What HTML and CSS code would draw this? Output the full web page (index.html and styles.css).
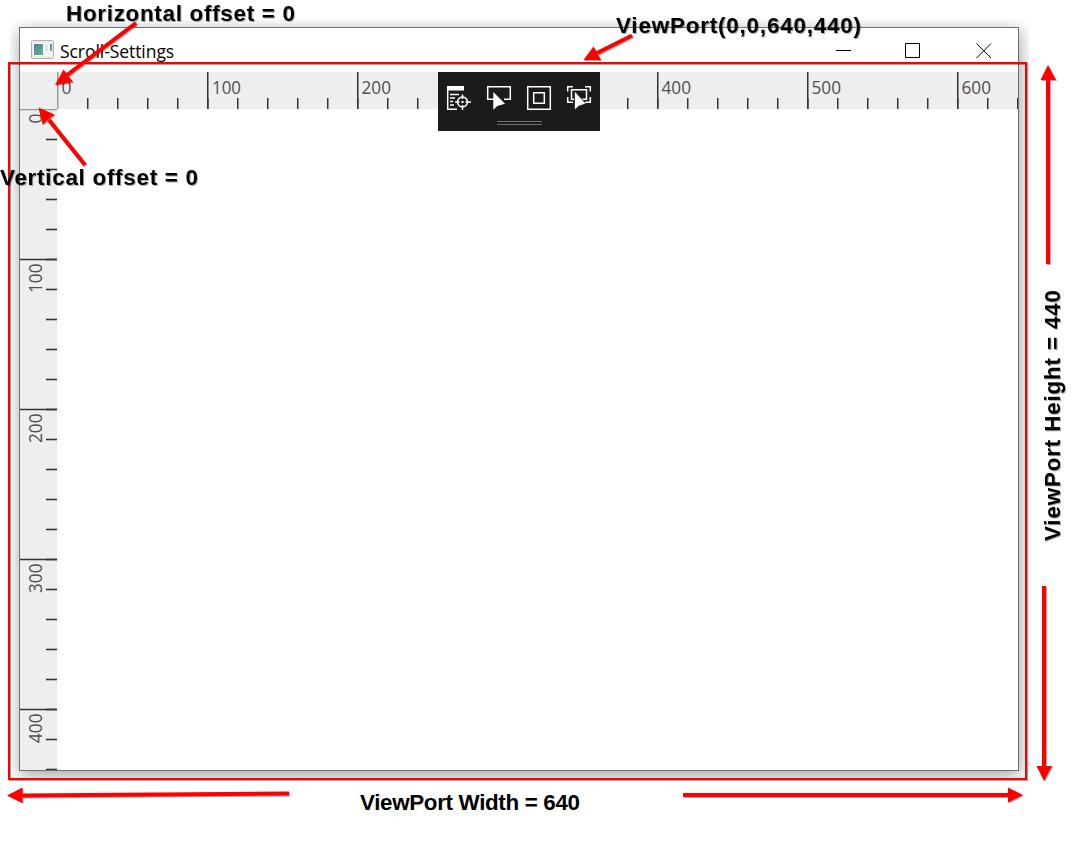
FILE: index.html
```html
<!DOCTYPE html>
<html lang="en">
<head>
<meta charset="utf-8">
<title>Scroll-Settings</title>
<link rel="stylesheet" href="styles.css">
</head>
<body>
<main class="stage">
  <div class="backdrop">
    <section class="window">
      <header class="titlebar">
        <svg class="app-icon" width="23" height="19" viewBox="0 0 23 19">
          <defs><linearGradient id="pane" x1="0" y1="0" x2="1" y2="1"><stop offset="0" stop-color="#4b83a8"/><stop offset="1" stop-color="#62b584"/></linearGradient></defs>
          <rect x=".5" y=".5" width="22" height="18" rx="1" fill="#e9edf1" stroke="#a9b3bd"/>
          <rect x="2" y="3" width="19" height="13" fill="#fff"/>
          <rect x="3" y="4" width="9" height="11" fill="url(#pane)"/>
          <rect x="14" y="4" width="3" height="7" fill="#e0e6ea"/>
          <rect x="19" y="4" width="2" height="7" fill="url(#pane)"/>
          <rect x="14" y="12" width="7" height="3" fill="#f0f2f3"/>
        </svg>
        <h1 class="title">Scroll-Settings</h1>
        <svg class="controls" width="156" height="15" viewBox="0 0 156 15" fill="none" stroke="#000">
          <path d="M0 7.5H15M69.5 .5H83.5V14.5H69.5ZM140.5 .5L155 15M155 .5L140.5 15"/>
        </svg>
      </header>
      <div class="workspace">
        <div class="corner"></div>
        <svg class="ruler" width="961" height="37" viewBox="0 0 961 37">
          <defs><pattern id="h-ticks" width="30" height="37" patternUnits="userSpaceOnUse"><rect y="26" width="1.5" height="11" fill="#333"/></pattern></defs>
          <rect x="10" width="951" height="37" fill="url(#h-ticks)"/>
          <path class="origin" d="M.75 0V37"/>
          <path class="major" d="M150.75 0V37M300.75 0V37M450.75 0V37M600.75 0V37M750.75 0V37M900.75 0V37"/>
          <g class="numbers">
            <text x="4.5" y="22" textLength="10" lengthAdjust="spacingAndGlyphs">0</text>
            <text x="155" y="22" textLength="29" lengthAdjust="spacingAndGlyphs">100</text>
            <text x="304.5" y="22" textLength="29.5" lengthAdjust="spacingAndGlyphs">200</text>
            <text x="454.5" y="22" textLength="29.5" lengthAdjust="spacingAndGlyphs">300</text>
            <text x="604.5" y="22" textLength="29.5" lengthAdjust="spacingAndGlyphs">400</text>
            <text x="754.5" y="22" textLength="29.5" lengthAdjust="spacingAndGlyphs">500</text>
            <text x="904.5" y="22" textLength="29.5" lengthAdjust="spacingAndGlyphs">600</text>
          </g>
        </svg>
        <svg class="ruler" width="37" height="661" viewBox="0 0 37 661">
          <defs><pattern id="v-ticks" width="37" height="30" patternUnits="userSpaceOnUse"><rect x="26" y="0" width="11" height="1.1" fill="#333"/><rect x="26" y="1" width="11" height="1" fill="#333" opacity=".2"/><rect x="26" y="29" width="11" height="1" fill="#333" opacity=".3"/></pattern></defs>
          <rect y="5" width="37" height="656" fill="url(#v-ticks)"/>
          <path class="origin" d="M0 .5H37"/>
          <path class="major" d="M0 150.5H37M0 300.5H37M0 450.5H37M0 600.5H37"/>
          <g class="numbers">
            <text transform="translate(22 14.5) rotate(-90)" textLength="10" lengthAdjust="spacingAndGlyphs">0</text>
            <text transform="translate(22.4 184) rotate(-90)" textLength="29.5" lengthAdjust="spacingAndGlyphs">100</text>
            <text transform="translate(22.4 334) rotate(-90)" textLength="29.5" lengthAdjust="spacingAndGlyphs">200</text>
            <text transform="translate(22.4 484) rotate(-90)" textLength="29.5" lengthAdjust="spacingAndGlyphs">300</text>
            <text transform="translate(22.4 634) rotate(-90)" textLength="29.5" lengthAdjust="spacingAndGlyphs">400</text>
          </g>
        </svg>
        <div class="canvas"></div>
      </div>
    </section>
  </div>
  <svg class="toolbar" width="162" height="59" viewBox="0 0 162 59">
    <rect width="162" height="59" fill="#1b1b1b"/>
    <g fill="none" stroke="#fff" stroke-width="1.5">
      <path d="M9.7 14V37.3H19M12 22.5H21M12 26H17M12 29.5H15M12 33H16"/>
      <circle cx="24.5" cy="30" r="5"/>
      <path d="M24.5 22.5V27M24.5 33V38M17 30H21.5M27.5 30H33"/>
      <path d="M55.5 27.3H49.7V14.7H72.3V27.3H66"/>
      <path d="M89.7 14.7H112.3V37.3H89.7ZM95.7 20.7H106.3V31.3H95.7Z"/>
      <path d="M129.7 19.5V14.7H135M147 14.7H152.3V19.5M129.7 25V30.3H135M147 30.3H152.3V25M136 27.3H133.5V17.7H148.5V27.3H144"/>
    </g>
    <g fill="#fff">
      <rect x="9" y="14" width="17" height="4.5"/>
      <circle cx="24.5" cy="30" r="1.2"/>
      <path d="M55.3 20V37.7L59.3 34L67 31.8Z"/>
      <path d="M136.5 19V38L141 34L148 31.8Z" stroke="#1b1b1b" stroke-width=".7"/>
    </g>
    <path d="M59 49.5H104M59 52.5H104" stroke="#707070"/>
  </svg>
  <svg class="annotations" width="1079" height="841" viewBox="0 0 1079 841">
    <g class="marks">
      <rect x="9" y="63" width="1017" height="716" fill="none" stroke="#f00" stroke-width="2"/>
      <g fill="none" stroke="#f00" stroke-width="4">
        <path d="M136 23L67 75"/>
        <path d="M85 165L49 120"/>
        <path d="M632 35.5L597 53"/>
        <path d="M1048 264V78"/>
        <path d="M1044 586V768"/>
        <path d="M289 793.5L21 795.5"/>
        <path d="M683 795H1009"/>
      </g>
      <g fill="#f00">
        <path d="M55 85L63.5 69.5L73 82Z"/>
        <path d="M38.5 107.5L54.5 114.5L42.5 124.5Z"/>
        <path d="M583.5 60L593.5 46.5L601 60Z"/>
        <path d="M1048 65L1040.5 80H1056Z"/>
        <path d="M1044 781L1036.5 766H1052Z"/>
        <path d="M7 795.5L22.5 787.5V803Z"/>
        <path d="M1023 795L1008 787.5V802.5Z"/>
      </g>
    </g>
    <g class="labels shadowed">
      <text x="66" y="21" textLength="229">Horizontal offset = 0</text>
      <text x="0" y="185" textLength="198">Vertical offset = 0</text>
      <text x="616" y="33" textLength="245">ViewPort(0,0,640,440)</text>
      <text transform="translate(1060 541) rotate(-90)" textLength="251">ViewPort Height = 440</text>
    </g>
    <g class="labels">
      <text x="360" y="810" textLength="220">ViewPort Width = 640</text>
    </g>
  </svg>
</main>
</body>
</html>
```

FILE: styles.css
```css
body { margin: 0; background: #fff; }
.stage {
  position: relative;
  box-sizing: border-box;
  width: 1079px;
  height: 841px;
  padding: 20px 0 0 10px;
  overflow: hidden;
}
.backdrop {
  box-sizing: border-box;
  width: 1019px;
  height: 760px;
  padding: 7px 10px 9px 9px;
  overflow: hidden;
}
.window {
  box-sizing: border-box;
  width: 1000px;
  height: 744px;
  border: 1px solid #707070;
  background: #fff;
  box-shadow: 1px 4px 16px rgba(0, 0, 0, .38);
}
.titlebar {
  box-sizing: border-box;
  display: flex;
  align-items: center;
  height: 44px;
  padding: 0 26px 2px 11px;
}
.app-icon { display: block; margin-right: 6px; }
.title {
  margin: 3px 0 0;
  color: #000;
  font: 400 17.5px/24px "Open Sans", "Noto Sans", sans-serif;
  letter-spacing: -.06px;
}
.controls { display: block; margin-left: auto; margin-top: 2px; }
.workspace {
  display: grid;
  grid-template-columns: 37px 961px;
  grid-template-rows: 37px 661px;
}
.corner { background: #eee; }
.ruler { display: block; background: #eee; }
.canvas { background: #fff; }
.major { stroke: #333; stroke-width: 1.5; }
.origin { stroke: #999; stroke-width: 1.5; }
.numbers { fill: #505050; font: 400 17.5px "Open Sans", "Noto Sans", sans-serif; }
.toolbar { position: absolute; left: 438px; top: 72px; }
.annotations { position: absolute; left: 0; top: 0; }
.marks { filter: drop-shadow(1px 1px .5px rgba(0, 0, 0, .35)); }
.labels { fill: #000; font: 700 22.4px "Liberation Sans", Arial, sans-serif; }
.shadowed { filter: drop-shadow(1.5px 1.5px .7px rgba(0, 0, 0, .35)); }
```
